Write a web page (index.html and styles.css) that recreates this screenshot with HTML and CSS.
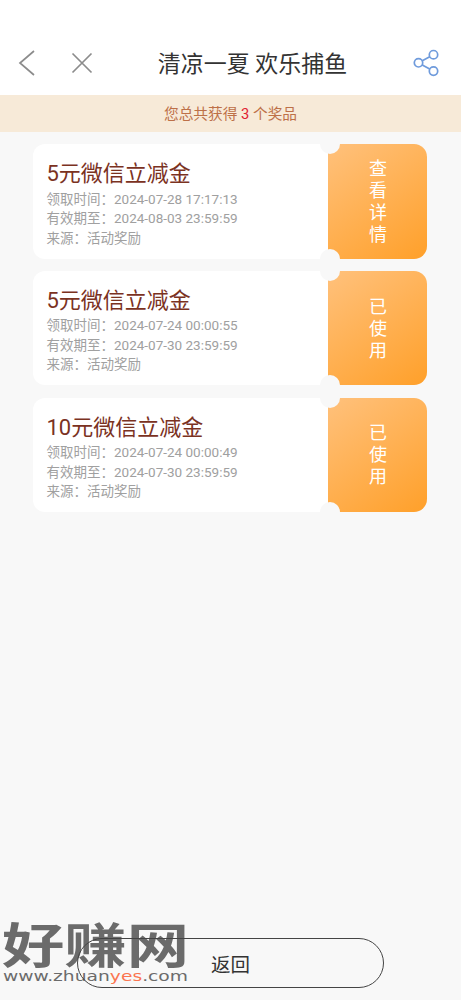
FILE: index.html
```html
<!DOCTYPE html>
<html lang="zh-CN">
<head>
    <meta charset="UTF-8">
    <meta name="viewport" content="width=device-width, initial-scale=1.0">
    <title>清凉一夏 欢乐捕鱼</title>
    <link rel="stylesheet" href="styles.css">
</head>
<body>
    <header class="navbar">
        <svg class="nav-back" width="18" height="28" viewBox="0 0 18 28">
            <path d="M16 2L2 14L16 26"/>
        </svg>
        <svg class="nav-close" width="22" height="22" viewBox="0 0 22 22">
            <path d="M1.5 1.5L20.5 20.5M20.5 1.5L1.5 20.5"/>
        </svg>
        <h1>清凉一夏 欢乐捕鱼</h1>
        <svg class="nav-share" width="28" height="28" viewBox="0 0 28 28">
            <circle cx="6.5" cy="13.8" r="4.2"/>
            <circle cx="21.5" cy="5.7" r="4.2"/>
            <circle cx="21.5" cy="22.1" r="4.2"/>
            <path d="M10.3 11.8L17.7 7.8M10.3 15.9L17.7 20"/>
        </svg>
    </header>

    <div class="summary">您总共获得 <b>3</b> 个奖品</div>

    <!-- Prize list -->
    <main class="prizes">
        <div class="coupon">
            <div class="info">
                <h2>5元微信立减金</h2>
                <p>领取时间：2024-07-28 17:17:13</p>
                <p>有效期至：2024-08-03 23:59:59</p>
                <p>来源：活动奖励</p>
            </div>
            <div class="status"><span>查看详情</span></div>
        </div>
        <div class="coupon">
            <div class="info">
                <h2>5元微信立减金</h2>
                <p>领取时间：2024-07-24 00:00:55</p>
                <p>有效期至：2024-07-30 23:59:59</p>
                <p>来源：活动奖励</p>
            </div>
            <div class="status"><span>已使用</span></div>
        </div>
        <div class="coupon">
            <div class="info">
                <h2>10元微信立减金</h2>
                <p>领取时间：2024-07-24 00:00:49</p>
                <p>有效期至：2024-07-30 23:59:59</p>
                <p>来源：活动奖励</p>
            </div>
            <div class="status"><span>已使用</span></div>
        </div>
    </main>

    <footer class="footer">
        <button type="button" class="return">返回</button>
    </footer>

    <svg class="watermark" width="192" height="90" viewBox="0 0 192 90">
        <text class="mark-name" transform="translate(2 63) scale(1 0.78)" textLength="187" lengthAdjust="spacingAndGlyphs">好赚网</text>
        <text class="mark-url" transform="translate(3 81) scale(1 0.85)" textLength="185" lengthAdjust="spacingAndGlyphs">www.zhuan<tspan class="mark-accent">yes</tspan>.com</text>
    </svg>
</body>
</html>
```
FILE: styles.css
```css
* { box-sizing: border-box; }

body {
    margin: 0;
    height: 1000px;
    display: flex;
    flex-direction: column;
    position: relative;
    overflow: hidden;
    background-color: #f8f8f8;
    font-family: Roboto, 'Noto Sans CJK SC', sans-serif;
}

h1, h2, p { margin: 0; font-weight: 400; }

.navbar {
    height: 95px;
    padding: 31px 21px 0 18px;
    display: flex;
    align-items: center;
    background: white;
}

.navbar svg {
    fill: none;
    stroke: #8c8c8c;
    stroke-width: 1.7;
}

.nav-close { margin-left: 35px; }

.navbar h1 {
    flex: 1;
    padding-top: 3px;
    text-align: center;
    font-size: 23px;
    line-height: 32px;
    color: #333;
    white-space: nowrap;
}

.navbar .nav-share { stroke: #6f9bdc; }

.summary {
    height: 37px;
    line-height: 39px;
    text-align: center;
    font-size: 14.7px;
    color: #bd7048;
    background: #f7ead8;
}

.summary b {
    font-weight: 400;
    color: #e02030;
}

.prizes {
    flex: 1;
    padding: 12px 34px 0 33px;
    display: flex;
    flex-direction: column;
    gap: 12.3px;
}

.coupon {
    height: 114.5px;
    display: flex;
    position: relative;
}

.info {
    flex: 1;
    padding: 14px 0 0 13.5px;
    background: white;
    border-radius: 12px 0 0 12px;
}

.info h2 {
    font-size: 22px;
    line-height: 31.5px;
    color: #7b321f;
}

.info p {
    font-size: 13.5px;
    line-height: 19.6px;
    color: #a0a0a0;
}

.status {
    width: 99px;
    padding: 1px 0 0 1px;
    display: flex;
    align-items: center;
    justify-content: center;
    background: linear-gradient(145deg, #ffc17c, #ffa02a);
    border-radius: 0 13px 13px 0;
    color: white;
}

.status span {
    width: 18px;
    font-size: 18px;
    line-height: 22px;
}

/* ticket notches */
.coupon::before,
.coupon::after {
    content: '';
    position: absolute;
    right: 87px;
    width: 20px;
    height: 20px;
    border-radius: 50%;
    background: #f8f8f8;
}

.coupon::before { top: -10px; }
.coupon::after { bottom: -10px; }

.footer {
    padding: 0 77px 12px;
    display: flex;
}

.return {
    flex: 1;
    height: 50px;
    position: relative;
    z-index: 1;
    border: 1.5px solid #444;
    border-radius: 25px;
    background: transparent;
    font-family: inherit;
    font-size: 19.5px;
    color: #333;
}

.watermark {
    position: absolute;
    left: 0;
    bottom: 10px;
}

.mark-name {
    font-family: 'Noto Sans CJK SC', sans-serif;
    font-size: 61px;
    font-weight: 700;
    fill: #6b6b6b;
}

.mark-url {
    font-family: 'DejaVu Sans', sans-serif;
    font-size: 17px;
    fill: #6b6b6b;
}

.mark-accent { fill: #fb7550; }
```
